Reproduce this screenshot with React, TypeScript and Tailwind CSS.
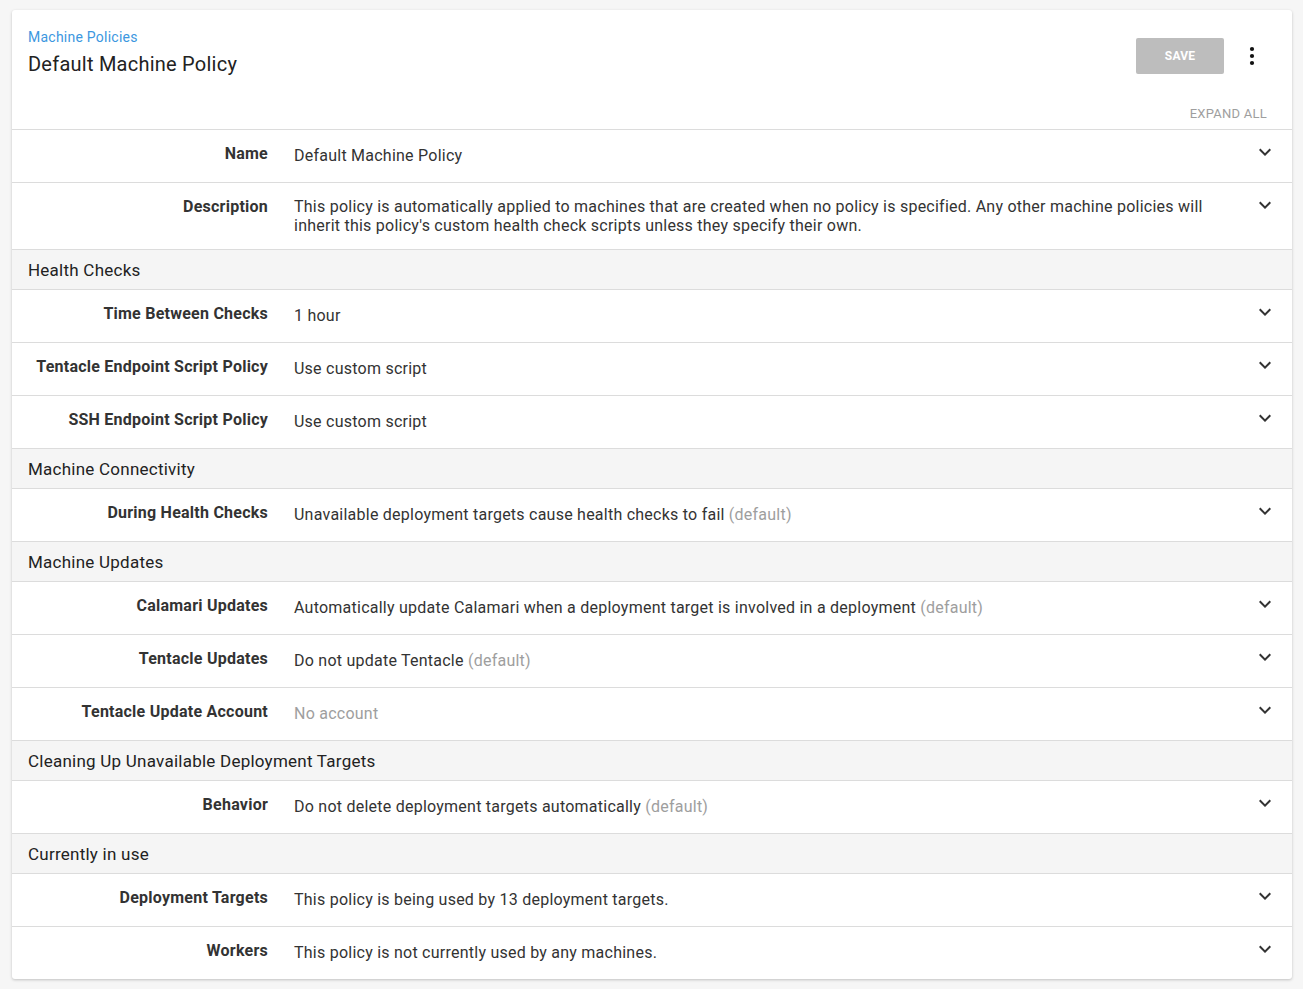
import React from "react";

const Chevron = () => (
  <svg width="24" height="24" viewBox="0 0 24 24" className="shrink-0 mt-[-4px] text-[#333333]" fill="currentColor">
    <path d="M16.59 8.59L12 13.17 7.41 8.59 6 10l6 6 6-6z" />
  </svg>
);

type Row = { label: string; value: React.ReactNode };
type Section = { title?: string; rows: Row[] };

const Def = () => <span className="text-[#9e9e9e]"> (default)</span>;

const sections: Section[] = [
  {
    rows: [
      { label: "Name", value: "Default Machine Policy" },
      {
        label: "Description",
        value:
          "This policy is automatically applied to machines that are created when no policy is specified. Any other machine policies will inherit this policy's custom health check scripts unless they specify their own.",
      },
    ],
  },
  {
    title: "Health Checks",
    rows: [
      { label: "Time Between Checks", value: "1 hour" },
      { label: "Tentacle Endpoint Script Policy", value: "Use custom script" },
      { label: "SSH Endpoint Script Policy", value: "Use custom script" },
    ],
  },
  {
    title: "Machine Connectivity",
    rows: [
      {
        label: "During Health Checks",
        value: (
          <>
            Unavailable deployment targets cause health checks to fail
            <Def />
          </>
        ),
      },
    ],
  },
  {
    title: "Machine Updates",
    rows: [
      {
        label: "Calamari Updates",
        value: (
          <>
            Automatically update Calamari when a deployment target is involved in a deployment
            <Def />
          </>
        ),
      },
      {
        label: "Tentacle Updates",
        value: (
          <>
            Do not update Tentacle
            <Def />
          </>
        ),
      },
      { label: "Tentacle Update Account", value: <span className="text-[#9e9e9e]">No account</span> },
    ],
  },
  {
    title: "Cleaning Up Unavailable Deployment Targets",
    rows: [
      {
        label: "Behavior",
        value: (
          <>
            Do not delete deployment targets automatically
            <Def />
          </>
        ),
      },
    ],
  },
  {
    title: "Currently in use",
    rows: [
      { label: "Deployment Targets", value: "This policy is being used by 13 deployment targets." },
      { label: "Workers", value: "This policy is not currently used by any machines." },
    ],
  },
];

export default function App() {
  return (
    <div
      className="min-h-[989px] bg-[#f6f6f6] pt-[10px] pl-[12px] tracking-[0.24px]"
      style={{ fontFamily: "Roboto, 'Liberation Sans', sans-serif" }}
    >
      <div className="w-[1280px] bg-white rounded-[3px] shadow-[0_1px_3px_rgba(0,0,0,0.22)] overflow-hidden">
        <div className="flex justify-between pl-[16px] pr-[16px] pt-[17px]">
          <div>
            <div className="text-[14px] leading-[20px] text-[#3c97e0]">Machine Policies</div>
            <div className="mt-[3px] text-[20px] leading-[28px] text-[#222222]">Default Machine Policy</div>
          </div>
          <div className="flex items-center mt-[11px] h-[36px]">
            <div className="w-[88px] h-[36px] rounded-[2px] bg-[#bdbdbd] flex items-center justify-center text-white text-[12px] font-bold tracking-[0.2px]">
              SAVE
            </div>
            <div className="w-[48px] h-[36px] ml-[4px] flex items-center justify-center">
              <svg width="24" height="24" viewBox="0 0 24 24" fill="#111">
                <circle cx="12" cy="5" r="2.1" />
                <circle cx="12" cy="12" r="2.1" />
                <circle cx="12" cy="19" r="2.1" />
              </svg>
            </div>
          </div>
        </div>
        <div className="flex justify-end pr-[25px] mt-[28px] pb-[7px]">
          <span className="text-[13px] leading-[16px] text-[#9e9e9e]">EXPAND ALL</span>
        </div>
        {sections.map((s, i) => (
          <div key={i}>
            {s.title && (
              <div className="border-t border-[#dcdcdc] bg-[#f5f5f5] pl-[16px] pt-[11px] pb-[9px] text-[17px] leading-[19px] text-[#222222]">
                {s.title}
              </div>
            )}
            {s.rows.map((r) => (
              <div
                key={r.label}
                className="flex items-start border-t border-[#dcdcdc] min-h-[53px] py-[14px] pl-[16px] pr-[15px]"
              >
                <div className="w-[240px] shrink-0 text-right font-bold text-[16px] leading-[19px] text-[#333333]">
                  {r.label}
                </div>
                <div className="flex-1 ml-[26px] mr-[40px] min-h-[23px] flex items-center text-[16px] leading-[19px] text-[#333333]">
                  <div>{r.value}</div>
                </div>
                <Chevron />
              </div>
            ))}
          </div>
        ))}
      </div>
    </div>
  );
}
